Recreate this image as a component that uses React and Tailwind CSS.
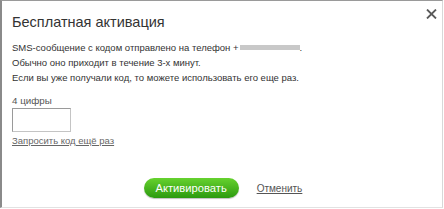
import React from "react";

export default function App() {
    return (
        <div className="w-[444px] h-[209px] bg-white" style={{ fontFamily: "'Liberation Sans', Arial, sans-serif" }}>
            <div className="relative h-[208px] w-[443px] border-l-2 border-t border-r border-b border-l-[#8a8a8a] border-t-[#9a9a9a] border-r-[#d8d8d8] border-b-[#e2e2e2] pl-[10px] pt-[11px]">
                <button className="absolute right-[5px] top-[8px]">
                    <svg width="11" height="10" viewBox="0 0 11 10" fill="none" stroke="#5a5a5a" strokeWidth="1.8">
                        <path d="M1 0.5 L10 9.5 M10 0.5 L1 9.5" />
                    </svg>
                </button>
                <h2 className="text-[14.5px] leading-[20px] text-[#333]">Бесплатная активация</h2>
                <div className="mt-[8px] text-[9.5px] leading-[15px] text-[#333]">
                    <p className="flex items-center">
                        SMS-сообщение с кодом отправлено на телефон +
                        <span className="inline-block w-[60px] h-[5px] bg-[#c8c8c8] ml-[1px] blur-[0.6px]"></span>.
                    </p>
                    <p>Обычно оно приходит в течение 3-х минут.</p>
                    <p>Если вы уже получали код, то можете использовать его еще раз.</p>
                </div>
                <div className="mt-[10px] text-[9.8px] leading-[12px] text-[#555]">4 цифры</div>
                <input className="mt-[1px] block w-[59px] h-[24px] border border-[#c4c4c4] border-t-[#9a9a9a] border-l-[#9a9a9a] outline-none" />
                <a href="#" className="mt-[3px] block text-[9.5px] leading-[12px] text-[#666] underline">Запросить код ещё раз</a>
                <div className="mt-[31px] flex items-center justify-center gap-[18px] pr-[8px]">
                    <button className="h-[20px] w-[95px] rounded-full bg-gradient-to-b from-[#66d22e] to-[#2a9a0e] text-white text-[11.2px] leading-[20px] shadow-[0_1px_1px_rgba(0,0,0,0.25)]">Активировать</button>
                    <a href="#" className="text-[10px] text-[#555] underline">Отменить</a>
                </div>
            </div>
        </div>
    );
}
